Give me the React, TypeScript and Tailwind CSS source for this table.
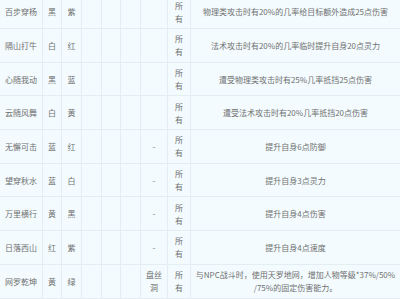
import React from "react";

type Row = {
  name: string;
  a: string;
  b: string;
  place: string;
  desc: React.ReactNode;
};

const rows: Row[] = [
  { name: "百步穿杨", a: "黑", b: "紫", place: "", desc: "物理类攻击时有20%的几率给目标额外造成25点伤害" },
  { name: "隔山打牛", a: "白", b: "红", place: "", desc: "法术攻击时有20%的几率临时提升自身20点灵力" },
  { name: "心随我动", a: "黑", b: "蓝", place: "", desc: "遭受物理类攻击时有25%几率抵挡25点伤害" },
  { name: "云随风舞", a: "白", b: "黄", place: "", desc: "遭受法术攻击时有20%几率抵挡20点伤害" },
  { name: "无懈可击", a: "蓝", b: "红", place: "-", desc: "提升自身6点防御" },
  { name: "望穿秋水", a: "蓝", b: "白", place: "-", desc: "提升自身3点灵力" },
  { name: "万里横行", a: "黄", b: "黑", place: "-", desc: "提升自身4点伤害" },
  { name: "日落西山", a: "红", b: "紫", place: "-", desc: "提升自身4点速度" },
  {
    name: "网罗乾坤",
    a: "黄",
    b: "绿",
    place: "盘丝洞",
    desc: (
      <>
        与NPC战斗时，使用天罗地网，增加人物等级*37%/50%
        <br />
        /75%的固定伤害能力。
      </>
    ),
  },
];

const cell = "flex items-center justify-center text-center border-r border-[#e2eef1] px-[5px] overflow-hidden";

export default function App() {
  return (
    <div
      className="w-[400px] h-[299px] overflow-hidden bg-[#f3fbfe] text-[#707070] text-[8px] leading-[13px]"
      style={{ fontFamily: '"Noto Sans CJK SC", "Noto Sans", sans-serif' }}
    >
      <div className="-mt-[4.7px]">
        {rows.map((r, i) => (
          <div
            key={i}
            className="grid grid-cols-[43px_19px_20px_20px_19px_20px_27px_23px_209px] h-[33.7px] border-b border-[#e2eef1]"
          >
            <div className={cell + " px-[2px] whitespace-nowrap"}>{r.name}</div>
            <div className={cell + " px-[2px]"}>{r.a}</div>
            <div className={cell + " px-[2px]"}>{r.b}</div>
            <div className={cell}></div>
            <div className={cell}></div>
            <div className={cell}></div>
            <div className={cell}>{r.place}</div>
            <div className={cell}>所有</div>
            <div className="flex items-center justify-center text-center px-[2px] whitespace-nowrap">
              <span>{r.desc}</span>
            </div>
          </div>
        ))}
      </div>
    </div>
  );
}
